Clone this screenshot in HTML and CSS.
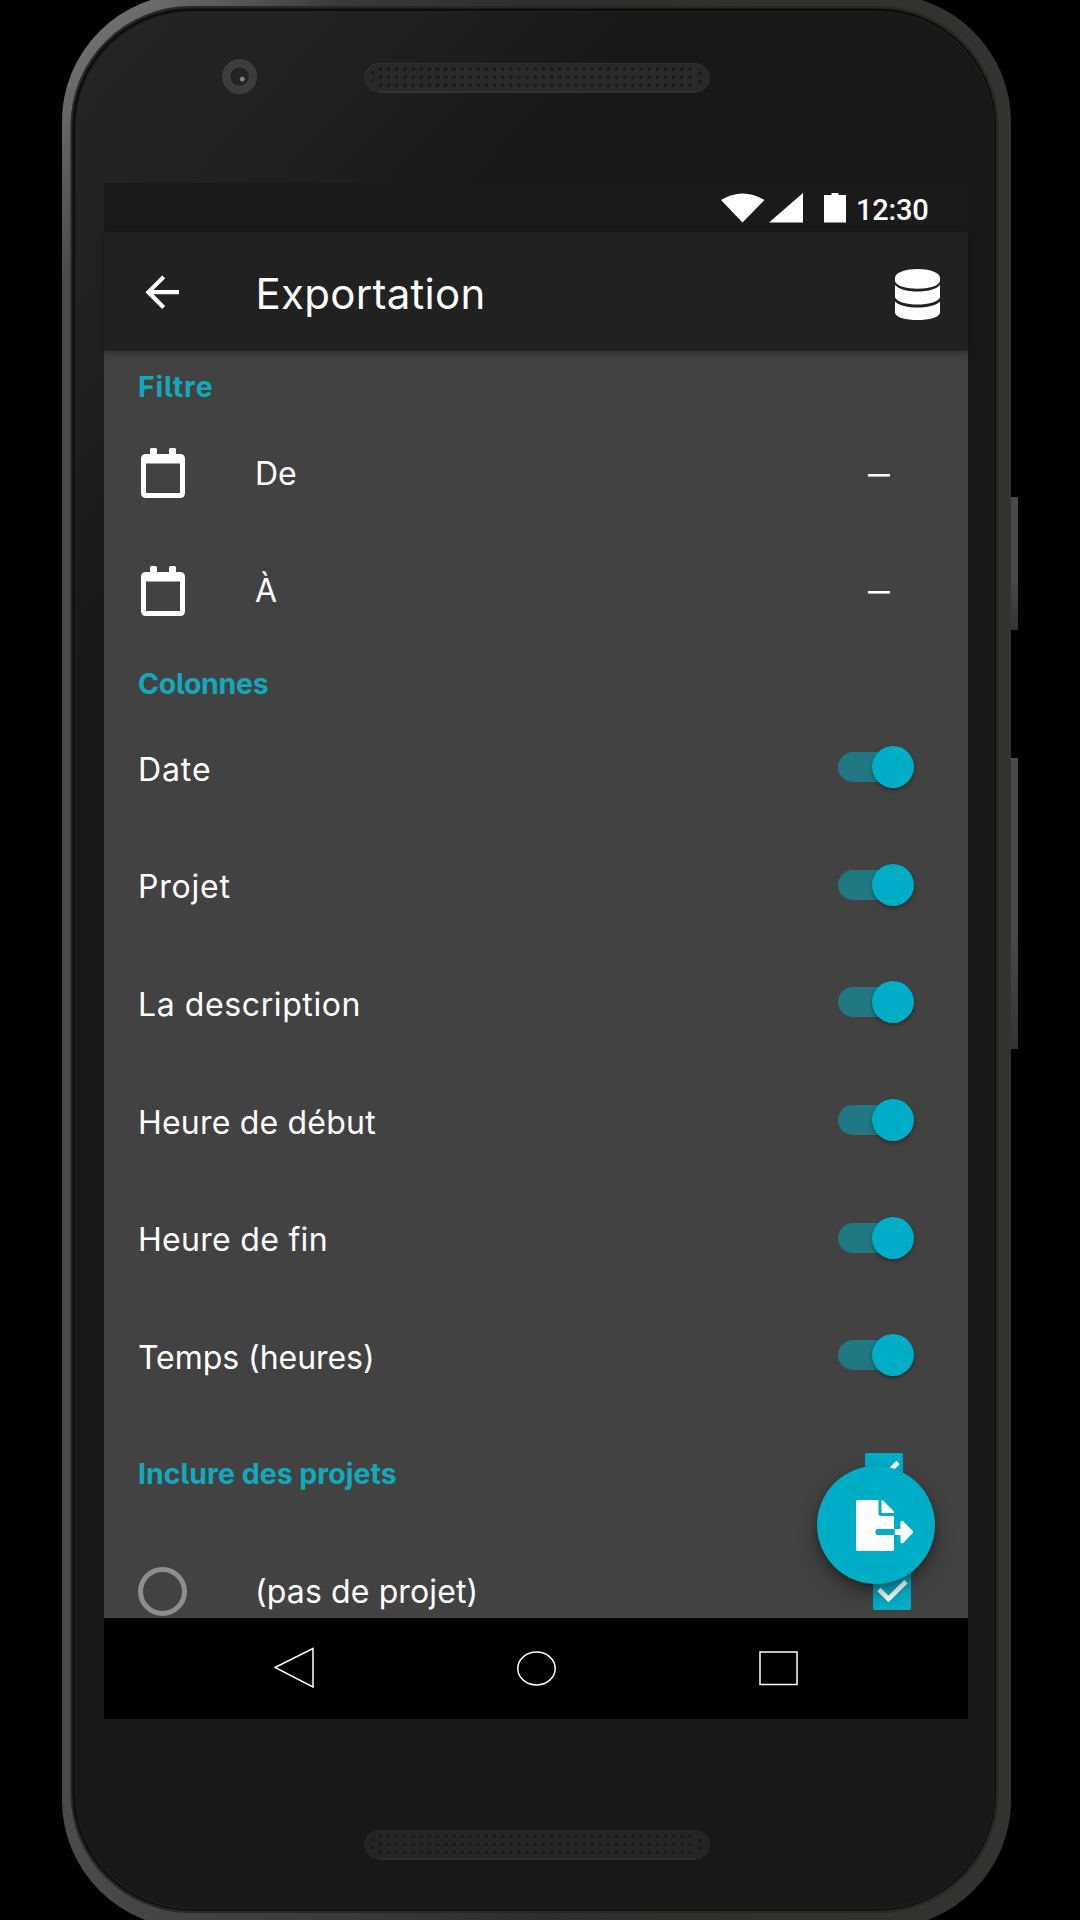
FILE: index.html
```html
<!DOCTYPE html>
<html lang="fr">
<head>
<meta charset="utf-8">
<title>Exportation</title>
<link rel="stylesheet" href="styles.css">
</head>
<body>
<svg class="defs" width="0" height="0" aria-hidden="true">
  <symbol id="calendar" viewBox="0 0 44 50">
    <path fill="#fff" fill-rule="evenodd" d="M9 1.5Q9 0 10.500 0H14.500Q16 0 16 1.500V6H28V1.500Q28 0 29.500 0H33.500Q35 0 35 1.500V6H39Q44 6 44 11V45Q44 50 39 50H5Q0 50 0 45V11Q0 6 5 6H9ZM5 15.500V45H39V15.500Z"/>
  </symbol>
  <symbol id="check" viewBox="0 0 38 38">
    <rect width="38" height="38" rx="1.500" fill="#00adc6"/>
    <path d="M6 17.500L15.500 27L33 9.500" fill="none" stroke="#fff" stroke-width="4.600"/>
  </symbol>
</svg>
<div class="device">
  <svg class="frame" width="1080" height="1920" viewBox="0 0 1080 1920" aria-hidden="true">
    <defs>
      <linearGradient id="metal" x1="0" y1="0" x2="1" y2="0">
        <stop offset="0" stop-color="#4b4b48"/><stop offset=".13" stop-color="#434341"/><stop offset=".5" stop-color="#2e2e2c"/><stop offset="1" stop-color="#33332f"/>
      </linearGradient>
      <linearGradient id="face" gradientUnits="userSpaceOnUse" x1="90" y1="20" x2="400" y2="300">
        <stop offset="0" stop-color="#252525"/><stop offset=".55" stop-color="#202020"/><stop offset="1" stop-color="#181818"/>
      </linearGradient>
      <linearGradient id="corner" gradientUnits="userSpaceOnUse" x1="100" y1="40" x2="200" y2="140">
        <stop offset="0" stop-color="#6d6d6b"/><stop offset="1" stop-color="#6d6d6b" stop-opacity="0"/>
      </linearGradient>
      <linearGradient id="key" x1="0" y1="0" x2="0" y2="1">
        <stop offset="0" stop-color="#4b494c"/><stop offset=".6" stop-color="#4b494c"/><stop offset="1" stop-color="#333234"/>
      </linearGradient>
      <pattern id="holes" width="8.140" height="8.140" patternUnits="userSpaceOnUse" x="376.500" y="65">
        <rect x="2.500" y="2.500" width="3.400" height="3.400" rx="1" fill="#191919"/>
        <path d="M7 2V7H2" fill="none" stroke="#303030" stroke-width=".8"/>
      </pattern>
      <g id="speaker">
        <rect x="364.500" y="63.500" width="345" height="28.500" rx="14.200" fill="#292929" stroke="#2e2e2e"/>
        <rect x="376.500" y="65" width="319" height="24.400" fill="url(#holes)"/>
        <g fill="#191919"><circle cx="373" cy="72.500" r="1.700"/><circle cx="373" cy="80.600" r="1.700"/><circle cx="700" cy="73.500" r="1.700"/><circle cx="700" cy="81.500" r="1.700"/></g>
        <path d="M378 92H696" stroke="#383838" stroke-width="1.300"/>
      </g>
    </defs>
    <rect x="1009" y="497" width="9" height="133" fill="url(#key)"/>
    <rect x="1009" y="758" width="9" height="291" fill="url(#key)"/>
    <rect x="62" y="-6" width="949" height="1934" rx="128" fill="url(#metal)"/>
    <rect x="62" y="-6" width="949" height="1934" rx="128" fill="url(#corner)"/>
    <rect x="70.500" y="6" width="928" height="1907" rx="120" fill="#272725"/>
    <rect x="72.500" y="8.500" width="923.500" height="1902" rx="118" fill="#0d0d0d"/>
    <rect x="75.500" y="11.500" width="918.500" height="1897" rx="116" fill="url(#face)" stroke="#202020" stroke-width="1.200"/>
    <circle cx="239.600" cy="76.600" r="17.600" fill="#3b3d3d"/>
    <circle cx="239.600" cy="76.600" r="10" fill="#242226" stroke="#4a4b4b"/>
    <circle cx="240" cy="76" r="5.500" fill="#292226"/>
    <circle cx="242.300" cy="79.200" r="2.400" fill="#8b8489"/>
    <use href="#speaker"/>
    <use href="#speaker" y="1767" opacity=".75"/>
  </svg>

  <main class="screen">
    <div class="status">
      <svg width="126" height="30" viewBox="0 0 126 30">
        <g fill="#fff"><path d="M0 7Q21.500-6 43.500 7L21.500 29.500Z"/><path d="M48 29.500L82 0V29.500Z"/><path d="M103 2H110.500V0H117.500V2H125V29.500H103Z"/></g>
      </svg>
      <span class="clock">12:30</span>
    </div>

    <header class="appbar">
      <svg class="back" viewBox="0 0 24 24"><path fill="#fff" d="M20 11H7.830l5.590-5.590L12 4l-8 8 8 8 1.410-1.410L7.830 13H20z"/></svg>
      <h1 class="title">Exportation</h1>
      <svg class="database" viewBox="0 0 45 51">
        <g fill="#fff"><path d="M0 8.500C1 3 11 0 22.500 0S44 3 45 8.500V12C44 17 34 19.700 22.500 19.700S1 17 0 12Z"/><path d="M0 16C4 20.500 13 22.500 22.500 22.500S41 20.500 45 16V28.500C43 33 33 35.500 22.500 35.500S2 33 0 28.500Z"/><path d="M0 32.500C4 36.500 13 38.500 22.500 38.500S41 36.500 45 32.500V44C44 48.500 34 51 22.500 51S1 48.500 0 44Z"/></g>
      </svg>
    </header>

    <section class="content">
      <h2 class="heading heading-first"><span class="w-filtre">Filtre</span></h2>
      <div class="row"><svg class="calendar"><use href="#calendar"/></svg><span class="label label-indent w-de">De</span><span class="value">–</span></div>
      <div class="row"><svg class="calendar"><use href="#calendar"/></svg><span class="label label-indent">À</span><span class="value">–</span></div>
      <h2 class="heading"><span class="w-colonnes">Colonnes</span></h2>
      <div class="row"><span class="label w-date">Date</span><i class="switch"></i></div>
      <div class="row"><span class="label w-projet">Projet</span><i class="switch"></i></div>
      <div class="row"><span class="label w-desc">La description</span><i class="switch"></i></div>
      <div class="row"><span class="label w-debut">Heure de début</span><i class="switch"></i></div>
      <div class="row"><span class="label w-fin">Heure de fin</span><i class="switch"></i></div>
      <div class="row"><span class="label w-temps">Temps (heures)</span><i class="switch"></i></div>
      <div class="row row-projects"><h2 class="subhead">Inclure des projets</h2><svg class="check"><use href="#check"/></svg></div>
      <div class="row row-none"><i class="ring"></i><span class="label label-indent w-pas">(pas de projet)</span><svg class="check"><use href="#check"/></svg></div>
      <div class="fab">
        <svg width="58" height="51" viewBox="0 0 58 51">
          <path fill="#fff" d="M2 0H22.500V13.500Q22.500 16 25 16H38V29H21.500Q19.500 29 19.500 31V33Q19.500 35 21.500 35H38V49Q38 51 36 51H2Q0 51 0 49V2Q0 0 2 0Z"/>
          <path fill="#fff" d="M25.500 0Q26.500 0 27 .6L37.300 10.800Q38 11.500 38 13H25.500ZM38.700 29H44.500V22.500Q45 20 47.200 21.200L56.500 30.700Q57.700 32 56.500 33.300L47.200 43Q45 44.300 44.500 42V35H38.700Z"/>
        </svg>
      </div>
    </section>

    <nav class="navbar">
      <svg width="40" height="42" viewBox="0 0 40 42"><path d="M1 20.500L39 1.500V40Z"/></svg>
      <svg width="40" height="42" viewBox="0 0 40 42"><ellipse cx="19.500" cy="21.500" rx="18.700" ry="16.500"/></svg>
      <svg width="40" height="42" viewBox="0 0 40 42"><rect x="1" y="5" width="37" height="32.500"/></svg>
    </nav>
  </main>
</div>
</body>
</html>
```
FILE: styles.css
```css
* { box-sizing: border-box; }
body { margin: 0; background: #000; color: #fff; font-family: Inter, "Liberation Sans", sans-serif; }
.defs { position: absolute; }
.device { position: relative; width: 1080px; height: 1920px; padding: 183px 112px 0 104px; overflow: hidden; background: #000; }
.frame { position: absolute; left: 0; top: 0; }
.screen { position: relative; display: flex; flex-direction: column; width: 864px; height: 1536px; }
h1, h2 { margin: 0; white-space: nowrap; }
svg { display: block; flex: none; }

.status { display: flex; align-items: flex-start; flex: none; height: 49px; padding: 10px 0 0 617px; background: #1a1a1a; }
.clock { margin-left: 9px; font: 500 29px/34px Roboto, sans-serif; letter-spacing: -0.200px; }

.appbar { position: relative; z-index: 1; display: flex; flex: none; align-items: center; height: 119px; padding: 0 28px 0 33px; background: #212121; box-shadow: 0 2px 7px rgba(0, 0, 0, .35); }
.back { width: 50.400px; height: 50.400px; margin-top: 1px; }
.title { flex: 1; padding: 5px 0 0 68px; font-size: 42px; font-weight: 400; line-height: 50px; letter-spacing: .300px; }
.database { width: 45px; height: 51px; margin-top: 5px; }

.content { position: relative; display: flex; flex: none; flex-direction: column; height: 1267px; overflow: hidden; background: #424242; }
.heading, .subhead { color: #12a9bb; font-size: 28.500px; font-weight: 700; line-height: 36px; font-feature-settings: "cv05"; }
.heading { flex: none; height: 58.400px; padding: 16px 0 0 34px; }
.heading-first { height: 63.400px; padding-top: 18px; }
.subhead { padding-top: 4px; }
.row { display: flex; flex: none; align-items: center; height: 117.600px; padding-left: 34px; }
.label { padding-top: 6px; font-size: 32px; line-height: 40px; white-space: nowrap; }
.label-indent { margin-left: -2px; padding-top: 1px; }
.calendar { width: 44px; height: 50px; margin: 0 72px 0 3px; }
.value { margin-left: auto; margin-right: 78px; padding-top: 1px; font-size: 32px; line-height: 40px; transform: scaleX(1.380); transform-origin: right; }

.w-filtre { letter-spacing: .800px; }
.w-colonnes { letter-spacing: -.300px; }
.w-date { letter-spacing: .900px; }
.w-projet { letter-spacing: .800px; }
.w-desc { letter-spacing: .600px; }
.w-debut { letter-spacing: .200px; }
.w-fin { letter-spacing: .300px; }
.w-temps { letter-spacing: -.050px; }
.w-pas { letter-spacing: .120px; }

.switch { position: relative; width: 76px; height: 42px; margin: 1px 54.500px 0 auto; }
.switch::before { content: ""; position: absolute; left: 0; top: 6px; width: 66px; height: 30px; border-radius: 15px; background: #217882; }
.switch::after { content: ""; position: absolute; right: 0; top: 0; width: 42px; height: 42px; border-radius: 50%; background: #00adc6; box-shadow: 0 2px 4px rgba(0, 0, 0, .35); }

.check { width: 38px; height: 38px; margin: 0 57px 2px auto; }
.row-projects .check { margin: 0 65px 0 auto; }
.row-none { margin-top: 2px; }
.ring { width: 49px; height: 49px; margin-right: 70px; border: 5px solid #8e8e8e; border-radius: 50%; }
.fab { position: absolute; left: 712.500px; top: 1115px; display: flex; align-items: center; width: 118px; height: 118px; padding-left: 39.500px; border-radius: 50%; background: #00adc6; box-shadow: 0 9px 18px rgba(0, 0, 0, .38), 0 2px 5px rgba(0, 0, 0, .2); }

.navbar { display: flex; align-items: center; justify-content: space-between; flex: 1; padding: 0 169px 2px 170px; background: #000; }
.navbar svg { fill: none; stroke: #fff; stroke-width: 1.500; }
```
